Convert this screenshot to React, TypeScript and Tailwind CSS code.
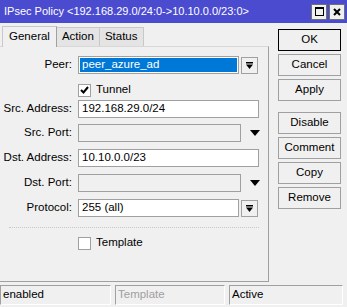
import React from 'react';

const DropArrow = () => (
  <svg width="7" height="7" viewBox="0 0 7 7">
    <rect x="0" y="0" width="7" height="1.5" fill="#000" />
    <path d="M0 2.5 H7 L3.5 7 Z" fill="#000" />
  </svg>
);

const Triangle = () => (
  <svg width="10" height="6" viewBox="0 0 10 6">
    <path d="M0 0 H10 L5 6 Z" fill="#000" />
  </svg>
);

const Label = ({ children }: { children: React.ReactNode }) => (
  <div className="w-[73px] text-right pr-[1px] shrink-0">{children}</div>
);

const Row = ({ label, className = '', children }: { label: string; className?: string; children: React.ReactNode }) => (
  <div className={`flex items-center h-[18px] gap-[5px] ${className}`}>
    <Label>{label}</Label>
    {children}
  </div>
);

const CheckBox = ({ checked, label, className = '' }: { checked?: boolean; label: string; className?: string }) => (
  <div className={`flex items-center h-[14px] gap-[5px] ${className}`}>
    <div className="w-[73px] shrink-0" />
    <div className="flex items-center gap-[5px]">
      <div className="w-[13px] h-[13px] bg-white border border-[#a0a0a0] flex items-center justify-center">
        {checked && (
          <svg width="9" height="8" viewBox="0 0 9 8">
            <path d="M1 4 L3.5 6.5 L8 1" stroke="#000" strokeWidth="2" fill="none" />
          </svg>
        )}
      </div>
      <span>{label}</span>
    </div>
  </div>
);

const sideButtons = [['OK', 'Cancel', 'Apply'], ['Disable', 'Comment', 'Copy', 'Remove']];

export default function App() {
  return (
    <div className="w-[347px] h-[307px] bg-[#f0f0f0] flex flex-col font-['Liberation_Sans',Arial,sans-serif] text-[11.5px] text-black leading-none">
      {/* Title bar */}
      <div className="h-[23px] bg-[#4b4bcf] flex items-center justify-between pl-[4px] pr-[2px] shrink-0">
        <span className="text-white text-[11px]">IPsec Policy &lt;192.168.29.0/24:0-&gt;10.10.0.0/23:0&gt;</span>
        <div className="flex gap-[2px]">
          <div className="w-[16px] h-[16px] bg-[#f0f0f0] border border-[#707070] flex items-center justify-center">
            <div className="w-[9px] h-[9px] border border-black border-t-2" />
          </div>
          <div className="w-[16px] h-[16px] bg-[#f0f0f0] border border-[#707070] flex items-center justify-center">
            <svg width="8" height="8" viewBox="0 0 8 8">
              <path d="M1 1 L7 7 M7 1 L1 7" stroke="#000" strokeWidth="2" />
            </svg>
          </div>
        </div>
      </div>

      <div className="flex flex-1 min-h-0">
        {/* Left side: tabs + panel */}
        <div className="w-[269px] flex flex-col pt-[2px]">
          <div className="flex items-end h-[21px] pl-[2px]">
            <div className="h-[21px] px-[6px] flex items-center bg-[#f0f0f0] border-t border-l border-r border-[#c8c8c8] border-r-[#a0a0a0] relative z-10 -mb-[1px]">
              General
            </div>
            <div className="h-[19px] px-[5px] flex items-center bg-[#e4e4e4] border-t border-r border-[#c8c8c8]">
              Action
            </div>
            <div className="h-[19px] px-[5px] flex items-center bg-[#e4e4e4] border-t border-r border-[#c8c8c8]">
              Status
            </div>
          </div>
          <div className="flex-1 border-t border-t-[#d8d8d8] border-r border-b border-[#a0a0a0] flex flex-col pt-[9px]">
            <Row label="Peer:">
              <div className="w-[161px] h-[18px] border border-[#a0a0a0] bg-white p-[1px]">
                <div className="h-full bg-[#0078d7] text-white flex items-center pl-[2px]">peer_azure_ad</div>
              </div>
              <div className="w-[17px] h-[17px] -ml-[3px] border border-[#a0a0a0] flex items-center justify-center">
                <DropArrow />
              </div>
            </Row>
            <CheckBox checked label="Tunnel" className="mt-[9px]" />
            <Row label="Src. Address:" className="mt-[3px]">
              <div className="w-[181px] h-[18px] border border-[#a0a0a0] bg-white flex items-center pl-[3px]">192.168.29.0/24</div>
            </Row>
            <Row label="Src. Port:" className="mt-[6px]">
              <div className="w-[163px] h-[18px] border border-[#a0a0a0] bg-[#f0f0f0]" />
              <div className="ml-[4px]"><Triangle /></div>
            </Row>
            <Row label="Dst. Address:" className="mt-[7px]">
              <div className="w-[181px] h-[18px] border border-[#a0a0a0] bg-white flex items-center pl-[3px]">10.10.0.0/23</div>
            </Row>
            <Row label="Dst. Port:" className="mt-[7px]">
              <div className="w-[163px] h-[18px] border border-[#a0a0a0] bg-[#f0f0f0]" />
              <div className="ml-[4px]"><Triangle /></div>
            </Row>
            <Row label="Protocol:" className="mt-[7px]">
              <div className="w-[161px] h-[18px] border border-[#a0a0a0] bg-white flex items-center pl-[3px]">255 (all)</div>
              <div className="w-[17px] h-[17px] -ml-[3px] border border-[#a0a0a0] flex items-center justify-center">
                <DropArrow />
              </div>
            </Row>
            <div className="mx-[9px] border-t border-dotted border-[#c8c8c8] mt-[10px]" />
            <CheckBox label="Template" className="mt-[8px]" />
          </div>
        </div>

        {/* Right side buttons */}
        <div className="flex-1 flex flex-col items-center pt-[6px] pl-[3px]">
          {sideButtons.map((group, gi) => (
            <div key={gi} className={`flex flex-col gap-[3px] ${gi === 1 ? 'mt-[11px]' : ''}`}>
              {group.map((b) => (
                <div
                  key={b}
                  className={`w-[63px] h-[22px] flex items-center justify-center bg-[#f0f0f0] border ${
                    b === 'OK' ? 'border-black' : 'border-[#a0a0a0]'
                  }`}
                >
                  {b}
                </div>
              ))}
            </div>
          ))}
        </div>
      </div>

      {/* Status bar */}
      <div className="h-[25px] flex gap-[4px] pt-[3px] pb-[2px] pr-[4px] shrink-0">
        <div className="w-[111px] border-t border-l border-[#a0a0a0] border-b border-r border-b-white border-r-white flex items-center pl-[2px]">enabled</div>
        <div className="w-[110px] border-t border-l border-[#a0a0a0] border-b border-r border-b-white border-r-white flex items-center pl-[2px] text-[#a0a0a0]">Template</div>
        <div className="flex-1 border-t border-l border-[#a0a0a0] border-b border-r border-b-white border-r-white flex items-center pl-[2px]">Active</div>
      </div>
    </div>
  );
}
